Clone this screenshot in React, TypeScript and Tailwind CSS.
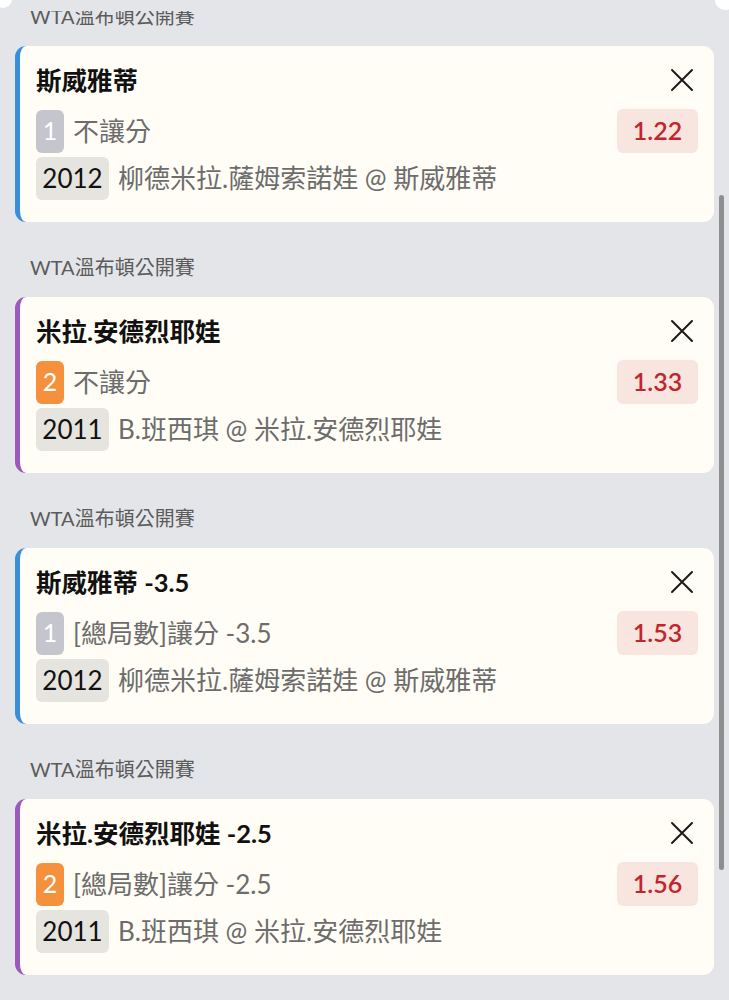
import React from 'react'

type Bet = {
  league: string
  title: string
  side: 1 | 2
  market: string
  odds: string
  code: string
  match: string
}

const bets: Bet[] = [
  { league: 'WTA溫布頓公開賽', title: '斯威雅蒂', side: 1, market: '不讓分', odds: '1.22', code: '2012', match: '柳德米拉.薩姆索諾娃 @ 斯威雅蒂' },
  { league: 'WTA溫布頓公開賽', title: '米拉.安德烈耶娃', side: 2, market: '不讓分', odds: '1.33', code: '2011', match: 'B.班西琪 @ 米拉.安德烈耶娃' },
  { league: 'WTA溫布頓公開賽', title: '斯威雅蒂 -3.5', side: 1, market: '[總局數]讓分 -3.5', odds: '1.53', code: '2012', match: '柳德米拉.薩姆索諾娃 @ 斯威雅蒂' },
  { league: 'WTA溫布頓公開賽', title: '米拉.安德烈耶娃 -2.5', side: 2, market: '[總局數]讓分 -2.5', odds: '1.56', code: '2011', match: 'B.班西琪 @ 米拉.安德烈耶娃' },
]

function CloseIcon() {
  return (
    <svg width="24" height="24" viewBox="0 0 24 24" className="text-[#1a1a1a]">
      <path d="M2 2 L22 22 M22 2 L2 22" stroke="currentColor" strokeWidth="2" fill="none" strokeLinecap="round" />
    </svg>
  )
}

function BetCard({ bet }: { bet: Bet }) {
  const home = bet.side === 1
  return (
    <div>
      <div className="pl-[30px] pt-[32px] pb-[17px] text-[20px] leading-[26px] text-[#5b5b5b]">{bet.league}</div>
      <div
        className={
          'mx-[15px] h-[176px] rounded-[11px] border-l-[5px] bg-[#fffdf5] pl-[16px] pr-[16px] pt-[20px] ' +
          (home ? 'border-[#3a8fdb]' : 'border-[#9a5bbd]')
        }
      >
        <div className="flex h-[28px] items-center justify-between pr-[4px]">
          <div className="text-[25.5px] font-bold leading-[28px] text-[#111]">{bet.title}</div>
          <CloseIcon />
        </div>
        <div className="mt-[15px] flex h-[44px] items-center justify-between">
          <div className="flex items-center gap-[9px]">
            <span
              className={
                'flex h-[43px] w-[28px] items-center justify-center rounded-[6px] text-[25px] text-white ' +
                (home ? 'bg-[#c4c5cd]' : 'bg-[#f5913c]')
              }
            >
              {bet.side}
            </span>
            <span className="text-[26px] text-[#6c6c6c]">{bet.market}</span>
          </div>
          <div className="flex h-[44px] w-[81px] items-center justify-center rounded-[6px] bg-[#f8e5df] text-[25px] font-semibold text-[#c0272d]">
            {bet.odds}
          </div>
        </div>
        <div className="mt-[4px] flex h-[43px] items-center gap-[9px]">
          <span className="flex h-[43px] w-[73px] items-center justify-center rounded-[6px] bg-[#e6e4df] text-[26px] text-[#111]">
            {bet.code}
          </span>
          <span className="text-[26px] text-[#6c6c6c] whitespace-nowrap">{bet.match}</span>
        </div>
      </div>
    </div>
  )
}

export default function App() {
  return (
    <div
      className="relative h-[1000px] w-[729px] overflow-hidden bg-[#e4e5e9]"
      style={{ fontFamily: 'Lato, "Noto Sans CJK TC", sans-serif' }}
    >
      <div className="-mt-[29px]">
        {bets.map((b, i) => (
          <BetCard key={i} bet={b} />
        ))}
      </div>
      {/* scrollbar */}
      <div className="absolute left-[719px] top-[195px] h-[675px] w-[5px] rounded-full bg-[#8e8e8e]" />
      {/* edge of the panel above, clipping the list */}
      <div className="absolute left-0 top-0 h-[11px] w-full bg-[#e4e5e9]" />
      <div className="absolute -left-[6px] -top-[10px] h-[18px] w-[18px] rounded-full bg-white" />
      <div className="absolute -right-[6px] -top-[10px] h-[20px] w-[20px] rounded-full bg-white" />
    </div>
  )
}
